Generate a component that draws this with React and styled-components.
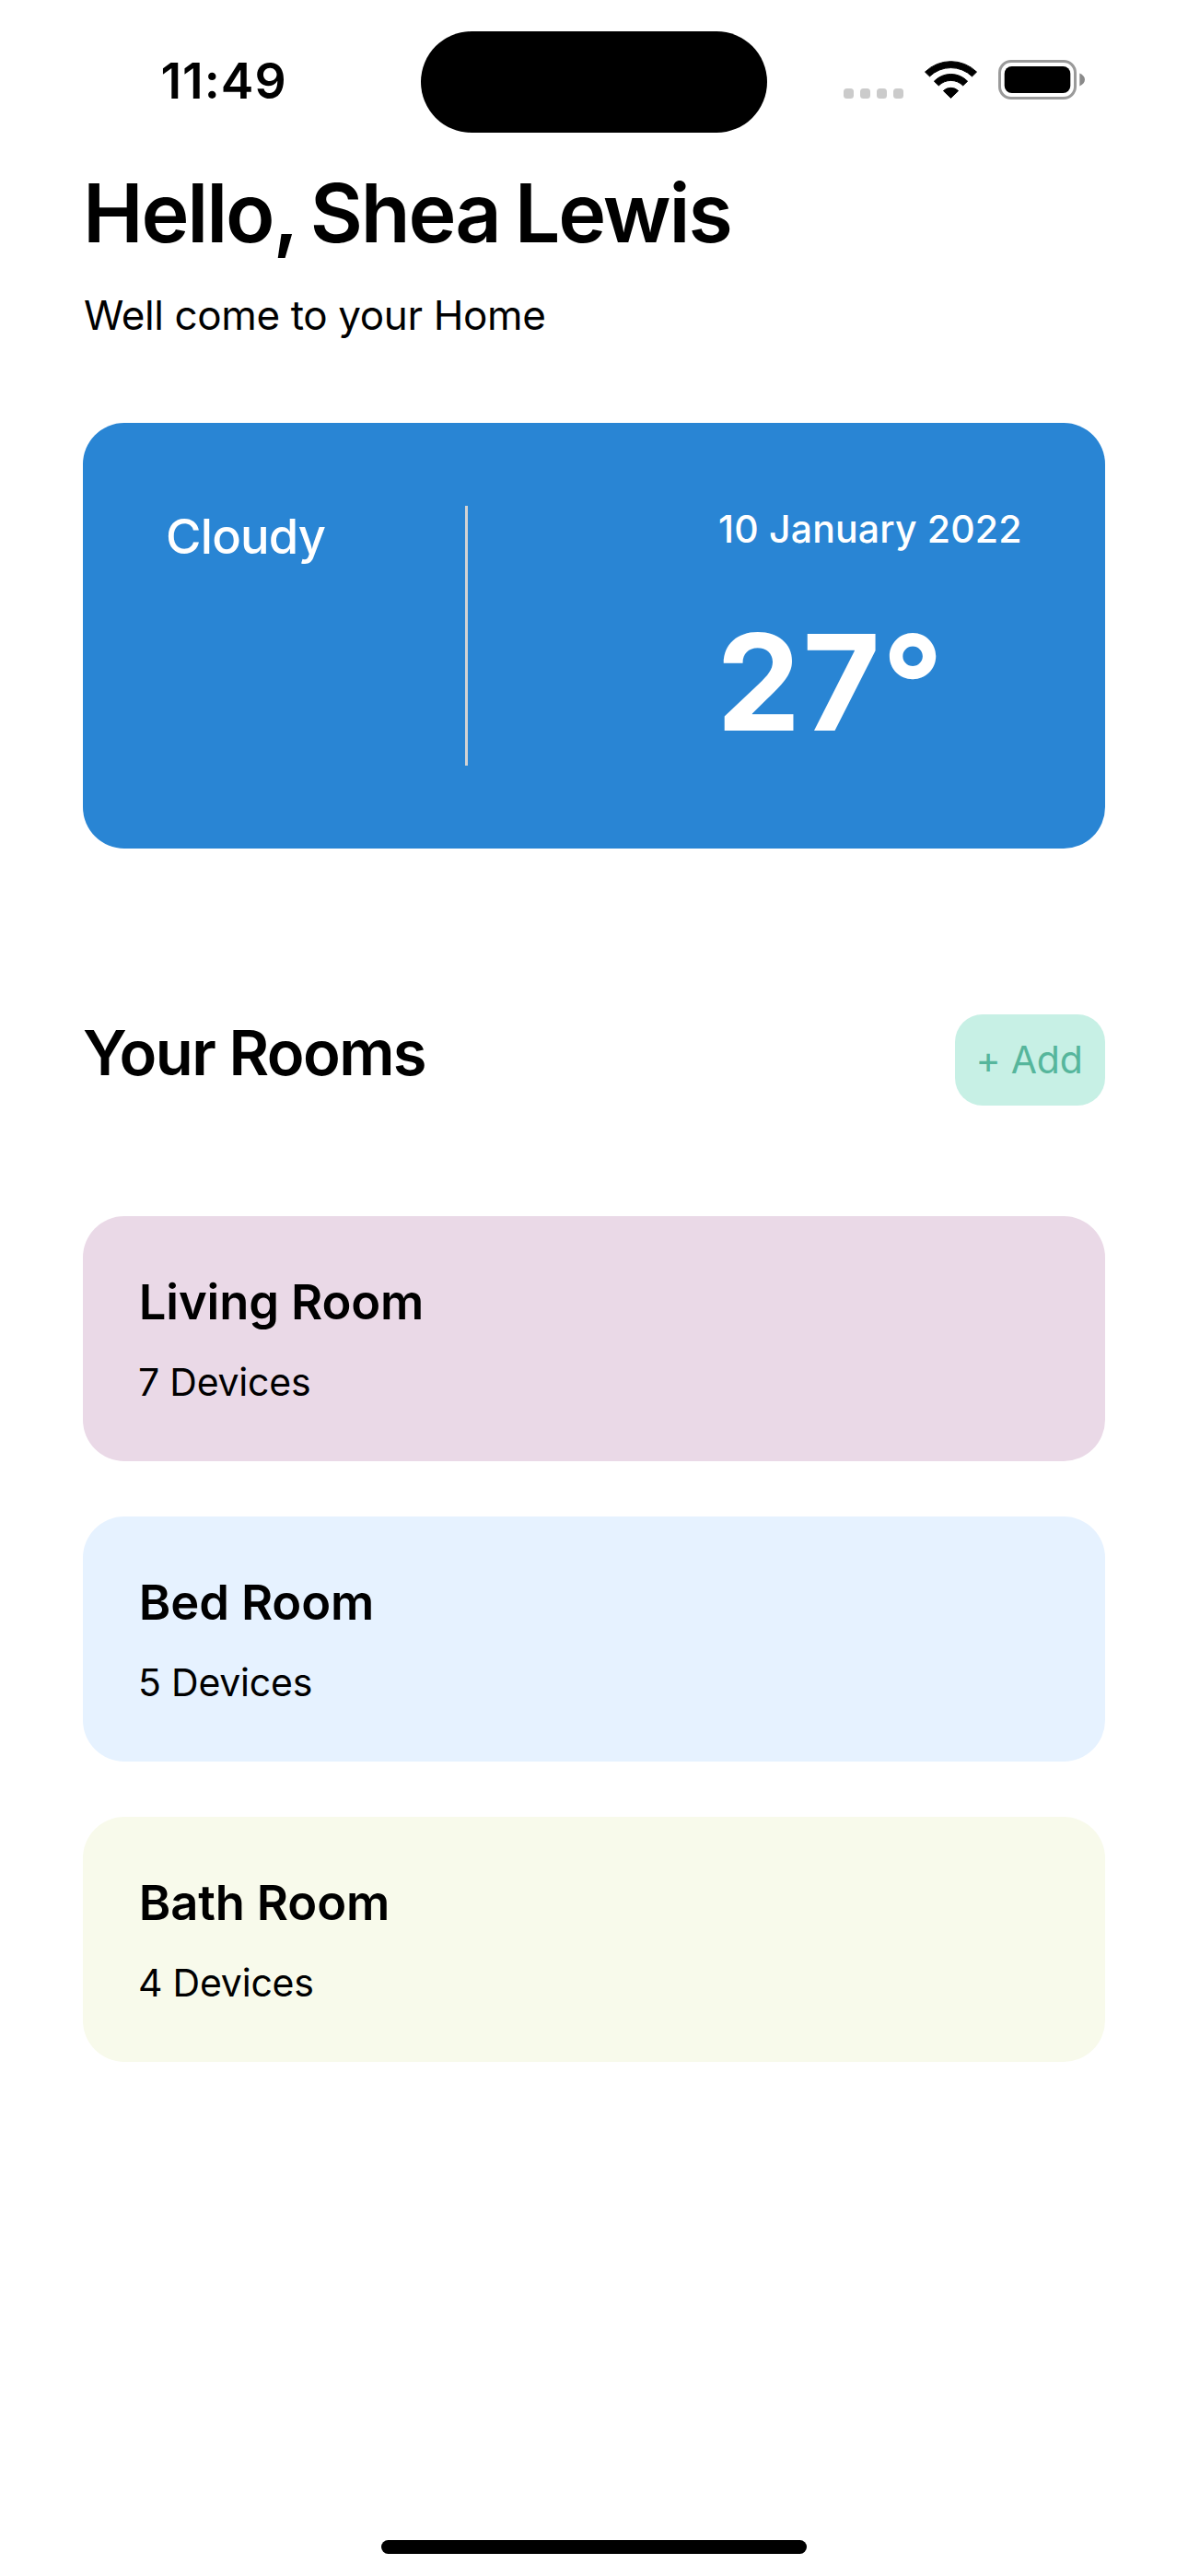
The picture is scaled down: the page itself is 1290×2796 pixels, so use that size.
import React from 'react';
import styled, { createGlobalStyle } from 'styled-components';

const GlobalStyle = createGlobalStyle`
  *, *::before, *::after { box-sizing: border-box; }
  body {
    margin: 0;
    background: #fff;
    color: #000;
    font-family: Inter, "Liberation Sans", sans-serif;
  }
  h1, h2, h3, p { margin: 0; }
`;

const Screen = styled.div`
  display: flex;
  flex-direction: column;
  width: 1290px;
  height: 2796px;
  background: #fff;
`;

const StatusBar = styled.header`
  display: grid;
  grid-template-columns: 1fr 376px 1fr;
  align-items: start;
  flex: none;
  height: 177px;
`;

const Clock = styled.time`
  padding: 56px 0 0 174.5px;
  font-size: 53.5px;
  font-weight: 600;
  line-height: 64px;
  letter-spacing: 1px;
`;

const Island = styled.div`
  height: 110.5px;
  margin-top: 33.5px;
  border-radius: 56px;
  background: #000;
`;

const StatusIcons = styled.div`
  display: flex;
  justify-content: flex-end;
  padding: 65px 112px 0 0;
`;

const SignalDots = styled.div`
  display: flex;
  gap: 7px;
  padding-top: 31px;
  margin-right: 23px;
`;

const SignalDot = styled.span`
  width: 11px;
  height: 11px;
  border-radius: 3.5px;
  background: #cbcbcb;
`;

const WifiSvg = styled.svg`
  display: block;
  width: 57px;
  height: 43px;
  margin-right: 23px;
`;

const BatterySvg = styled.svg`
  display: block;
  width: 94px;
  height: 43px;
`;

const Content = styled.main`
  display: flex;
  flex-direction: column;
  flex: 1;
  padding: 0 90px;
`;

const Greeting = styled.h1`
  font-size: 88px;
  font-weight: 600;
  line-height: 108px;
  letter-spacing: -2.15px;
  word-spacing: -4px;
`;

const Welcome = styled.p`
  margin-top: 30px;
  padding-left: 1px;
  font-size: 44px;
  line-height: 54px;
  letter-spacing: -0.38px;
`;

const WeatherCard = styled.section`
  display: flex;
  justify-content: space-between;
  height: 462px;
  margin-top: 90px;
  padding: 90px;
  border-radius: 45px;
  background: #2985d4;
  color: #fff;
`;

const ConditionColumn = styled.div`
  width: 328px;
  border-right: 3px solid #d3d3d3;
`;

const Condition = styled.p`
  font-size: 52.5px;
  font-weight: 500;
  line-height: 66px;
  letter-spacing: -0.8px;
`;

const Reading = styled.div`
  width: 330px;
`;

const DateText = styled.p`
  font-size: 41px;
  font-weight: 500;
  line-height: 50px;
  letter-spacing: 0.17px;
  white-space: nowrap;
`;

const Temperature = styled.p`
  margin: 52px 0 0 -2px;
  font-size: 145px;
  font-weight: 700;
  line-height: 180px;
  letter-spacing: 2.1px;
`;

const RoomsHeader = styled.div`
  display: flex;
  justify-content: space-between;
  align-items: flex-start;
  margin-top: 180px;
`;

const RoomsTitle = styled.h2`
  font-size: 67px;
  font-weight: 600;
  line-height: 83px;
  letter-spacing: -1.6px;
`;

const AddButton = styled.button`
  width: 163px;
  height: 99px;
  padding: 0 2px 1px 0;
  border: 0;
  border-radius: 30px;
  background: #c7f0e5;
  color: #56b69c;
  font-family: inherit;
  font-size: 41px;
  line-height: 50px;
  letter-spacing: -0.2px;
`;

const RoomList = styled.div`
  display: flex;
  flex-direction: column;
  gap: 60px;
  margin-top: 120px;
`;

const RoomCard = styled.article`
  height: 266px;
  padding: 60px;
  border-radius: 45px;
  background: ${(p) => p.$tint};
`;

const RoomName = styled.h3`
  padding-left: 0.8px;
  font-size: 52.5px;
  font-weight: 600;
  line-height: 66px;
  letter-spacing: -0.14px;
`;

const DeviceCount = styled.p`
  margin-top: 29px;
  font-size: 41px;
  line-height: 50px;
  letter-spacing: -0.22px;
`;

const HomeIndicator = styled.div`
  flex: none;
  align-self: center;
  width: 462px;
  height: 15px;
  margin-bottom: 24px;
  border-radius: 8px;
  background: #000;
`;

const rooms = [
  { name: 'Living Room', devices: 7, tint: '#ead9e7' },
  { name: 'Bed Room', devices: 5, tint: '#e6f2ff' },
  { name: 'Bath Room', devices: 4, tint: '#f8faeb' },
];

const WifiIcon = () => (
  <WifiSvg viewBox="0 0 57 43" fill="#000" stroke="#000" strokeWidth="1" strokeLinejoin="round">
    <path d="M0.5 13.1 A40 40 0 0 1 56.5 13.1 L51.5 17.9 A33 33 0 0 0 5.5 17.9 Z" />
    <path d="M10.4 23.2 A25 25 0 0 1 46.6 23.2 L41.7 27.9 A18.6 18.6 0 0 0 15.3 27.9 Z" />
    <path d="M20.4 33.6 A11.6 11.6 0 0 1 36.6 33.6 L28.5 41.4 Z" />
  </WifiSvg>
);

const BatteryIcon = () => (
  <BatterySvg viewBox="0 0 94 43">
    <rect x="1.5" y="1.5" width="82" height="40" rx="12.5" fill="none" stroke="#9a9a9a" strokeWidth="3" />
    <rect x="6.7" y="7" width="71.6" height="29" rx="8" fill="#000" />
    <path d="M88.3 14.6 C91.8 16 94 18.7 94 21.5 C94 24.3 91.8 27 88.3 28.4 Z" fill="#8a8a8a" />
  </BatterySvg>
);

export default function App() {
  return (
    <>
      <GlobalStyle />
      <Screen>
        <StatusBar>
          <Clock>11:49</Clock>
          <Island />
          <StatusIcons>
            <SignalDots>
              <SignalDot />
              <SignalDot />
              <SignalDot />
              <SignalDot />
            </SignalDots>
            <WifiIcon />
            <BatteryIcon />
          </StatusIcons>
        </StatusBar>
        <Content>
          <Greeting>Hello, Shea Lewis</Greeting>
          <Welcome>Well come to your Home</Welcome>
          <WeatherCard>
            <ConditionColumn>
              <Condition>Cloudy</Condition>
            </ConditionColumn>
            <Reading>
              <DateText>10 January 2022</DateText>
              <Temperature>27°</Temperature>
            </Reading>
          </WeatherCard>
          <RoomsHeader>
            <RoomsTitle>Your Rooms</RoomsTitle>
            <AddButton>+ Add</AddButton>
          </RoomsHeader>
          <RoomList>
            {rooms.map((room) => (
              <RoomCard key={room.name} $tint={room.tint}>
                <RoomName>{room.name}</RoomName>
                <DeviceCount>{room.devices} Devices</DeviceCount>
              </RoomCard>
            ))}
          </RoomList>
        </Content>
        <HomeIndicator />
      </Screen>
    </>
  );
}
